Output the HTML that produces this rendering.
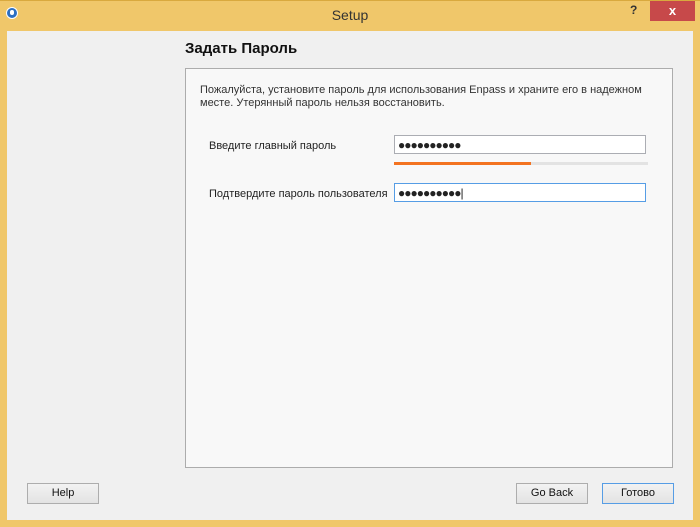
<!DOCTYPE html><html><head><meta charset="utf-8"><style>
body{margin:0;width:700px;height:527px;background:#f0c76a;position:relative;overflow:hidden;font-family:"Liberation Sans",sans-serif;font-size:11px;color:#222}
.a{position:absolute}
.btn{position:absolute;height:19px;border:1px solid #adadad;background:linear-gradient(#f2f2f2,#e3e3e3);text-align:center;line-height:19px;font-size:11px;color:#111}
.inp{position:absolute;left:394px;width:252px;height:19px;background:#fff;border:1px solid #abadb3;font-size:12px;line-height:19px;padding-left:3px;letter-spacing:-1px;box-sizing:border-box}
</style></head><body>
<div class="a" style="left:0;top:0;width:700px;height:1px;background:#d9a93e"></div>
<div class="a" style="left:6px;top:7px;width:12px;height:12px;border-radius:50%;background:#2d6fc1;border:1px solid #fff;box-sizing:border-box"></div>
<div class="a" style="left:10px;top:10px;width:4px;height:5px;border-radius:2px;background:#fff"></div>
<div class="a" style="left:0;top:7px;width:700px;text-align:center;font-size:14px;color:#333">Setup</div>
<div class="a" style="left:630px;top:3px;font-size:12px;font-weight:bold;color:#333">?</div>
<div class="a" style="left:650px;top:1px;width:45px;height:20px;background:#c7494a;color:#fff;text-align:center;line-height:20px;font-size:13px;font-weight:bold">x</div>
<div class="a" style="left:7px;top:31px;width:686px;height:489px;background:#f0f0f0"></div>
<div class="a" style="left:185px;top:40px;font-size:15px;font-weight:bold;color:#111">Задать Пароль</div>
<div class="a" style="left:185px;top:68px;width:486px;height:398px;background:#f8f8f8;border:1px solid #acacac"></div>
<div class="a" style="left:200px;top:84px;width:460px;line-height:13px;font-size:11px;color:#333">Пожалуйста, установите пароль для использования Enpass и храните его в надежном месте. Утерянный пароль нельзя восстановить.</div>
<div class="a" style="left:209px;top:140px;color:#222">Введите главный пароль</div>
<div class="inp" style="top:135px">●●●●●●●●●●</div>
<div class="a" style="left:394px;top:162px;width:254px;height:3px;background:#e3e3e3"></div>
<div class="a" style="left:394px;top:162px;width:137px;height:3px;background:#f37321"></div>
<div class="a" style="left:209px;top:188px;color:#222">Подтвердите пароль пользователя</div>
<div class="inp" style="top:183px;border-color:#569de5">●●●●●●●●●●|</div>
<div class="btn" style="left:27px;top:483px;width:70px">Help</div>
<div class="btn" style="left:516px;top:483px;width:70px">Go Back</div>
<div class="btn" style="left:602px;top:483px;width:70px;border-color:#569de5">Готово</div>
</body></html>
